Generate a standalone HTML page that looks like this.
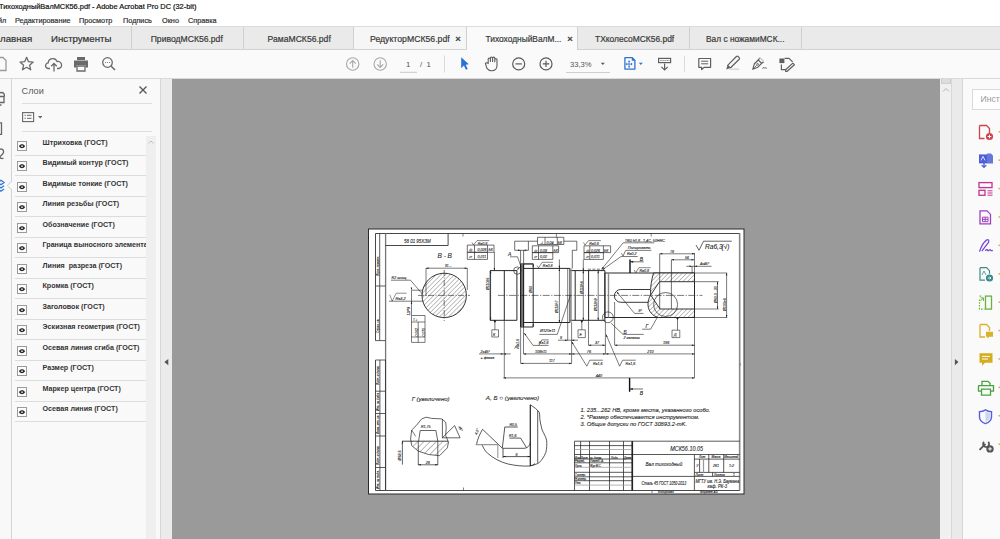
<!DOCTYPE html>
<html><head><meta charset="utf-8">
<style>
*{margin:0;padding:0;box-sizing:border-box}
html,body{width:1000px;height:539px;overflow:hidden;background:#fff;font-family:"Liberation Sans",sans-serif}
.a{position:absolute;white-space:nowrap}
#title span,#menu span,#tabs span,.tab{-webkit-text-stroke:0.2px currentColor}
#title{left:0;top:0;width:1000px;height:14px;background:#fff}
#menu{left:0;top:14px;width:1000px;height:12px;background:#fff}
#tabs{left:0;top:26px;width:1000px;height:24px;background:#eaeaea;border-top:1px solid #dcdcdc;border-bottom:1px solid #d2d2d2}
#tb{left:0;top:50px;width:1000px;height:29px;background:#fafafa;border-bottom:1px solid #dadada}
#main{left:0;top:79px;width:1000px;height:460px;background:#9a9a9a}
.tx{font-size:8px;color:#222}
.tab{position:absolute;top:0;height:22px;border-right:1px solid #d0d0d0;font-size:8.4px;color:#3a3a3a;line-height:21px;text-align:center}
.tt{top:6.5px;color:#3a3a3a}
.row{position:absolute;left:0;width:131px;height:20.5px;border-bottom:1px solid #dcdcdc}
.row .eye{position:absolute;left:1.5px;top:5.3px;width:10px;height:10px;border:1px solid #9a9a9a;background:#fcfcfc}
.row .lt{position:absolute;left:27.5px;top:3.6px;font-size:7.15px;font-weight:bold;color:#333}
</style></head>
<body>
<div id="title" class="a"><span class="a tx" style="left:-1px;top:2px;font-size:7.4px;color:#111">ТихоходныйВалМСК56.pdf - Adobe Acrobat Pro DC (32-bit)</span></div>
<div id="menu" class="a">
<span class="a tx" style="left:-2px;top:2px;font-size:7.3px;color:#333">йл</span>
<span class="a tx" style="left:15px;top:2px;font-size:7.3px;color:#333">Редактирование</span>
<span class="a tx" style="left:79px;top:2px;font-size:7.3px;color:#333">Просмотр</span>
<span class="a tx" style="left:123px;top:2px;font-size:7.3px;color:#333">Подпись</span>
<span class="a tx" style="left:162px;top:2px;font-size:7.3px;color:#333">Окно</span>
<span class="a tx" style="left:188px;top:2px;font-size:7.3px;color:#333">Справка</span>
</div>
<div id="tabs" class="a">
<span class="a" style="left:0;top:5.5px;font-size:9.7px;color:#333">лавная</span>
<span class="a" style="left:51px;top:5.5px;font-size:9.7px;color:#333">Инструменты</span>
<div class="tab" style="left:131px;width:113px;border-left:1px solid #d0d0d0"></div>
<div class="tab" style="left:244px;width:110px"></div>
<div class="tab" style="left:354px;width:113px;background:#f6f6f6"></div>
<div class="tab" style="left:467px;width:111px;background:#fafafa;height:23px"></div>
<div class="tab" style="left:578px;width:112px"></div>
<div class="tab" style="left:690px;width:112px"></div>
<span class="a tt" style="left:150.7px;font-size:8.6px">ПриводМСК56.pdf</span>
<span class="a tt" style="left:267.6px;font-size:8.6px">РамаМСК56.pdf</span>
<span class="a tt" style="left:370px;font-size:8.7px">РедукторМСК56.pdf</span>
<span class="a tt" style="left:455.2px;top:6px;font-size:9.5px;color:#4a4a4a;-webkit-text-stroke:0.5px #4a4a4a">×</span>
<span class="a tt" style="left:485.5px;font-size:8.4px">ТихоходныйВалМ...</span>
<span class="a tt" style="left:567.2px;top:6px;font-size:9.5px;color:#4a4a4a;-webkit-text-stroke:0.5px #4a4a4a">×</span>
<span class="a tt" style="left:595px;font-size:8.45px">ТХколесоМСК56.pdf</span>
<span class="a tt" style="left:706px;font-size:8.35px">Вал с ножамиМСК...</span>
</div>
<div id="tb" class="a">
<svg class="a" style="left:0;top:0" width="1000" height="29" viewBox="0 50 1000 29">
 <g fill="none" stroke="#6a6a6a" stroke-width="1.3">
  <!-- save (cut) -->
  <path d="M-3 57.5h6l3 3v10h-9z" stroke="#9a9a9a"/>
  <!-- star -->
  <path d="M26.6 57.3l1.9 4.4 4.7.4-3.6 3.1 1.1 4.6-4.1-2.5-4.1 2.5 1.1-4.6-3.6-3.1 4.7-.4z" stroke-linejoin="round"/>
  <!-- cloud upload -->
  <path d="M50 68.5h-1.5a2.8 2.8 0 0 1 -.3-5.6a4.6 4.6 0 0 1 8.9-1.3a3.3 3.3 0 0 1 1.8 6.9h-1.9" stroke-linejoin="round"/>
  <path d="M54 71.5v-8m-2.8 2.8l2.8-2.8 2.8 2.8"/>
  <!-- zoom search -->
  <circle cx="107.5" cy="62.5" r="4.8"/>
  <path d="M111 66l4 4" stroke-width="1.6"/>
 </g>
 <!-- printer -->
 <g fill="#6a6a6a">
  <path d="M77 57h8v3h-8z"/>
  <path d="M74 60.5h14v7h-2.5v-2.5h-9v2.5h-2.5z"/>
  <path d="M77 66h8v5h-8z" fill="none" stroke="#6a6a6a" stroke-width="1.3"/>
 </g>
 <g fill="#777"><circle cx="105.5" cy="62.5" r=".6"/><circle cx="107.5" cy="62.5" r=".6"/><circle cx="109.5" cy="62.5" r=".6"/></g>
 <!-- up/down circles -->
 <g fill="none" stroke="#a8a8a8" stroke-width="1.1">
  <circle cx="352.7" cy="64" r="6.2"/>
  <path d="M352.7 67.8v-7.2m-3 3l3-3 3 3"/>
  <circle cx="380.2" cy="64" r="6.2"/>
  <path d="M380.2 60.2v7.2m-3-3l3 3 3-3"/>
 </g>
 <path d="M400 72.3h17" stroke="#c8c8c8" stroke-width="1"/>
 <path d="M444.5 55.5v17" stroke="#dadada" stroke-width="1"/>
 <!-- blue select arrow -->
 <path d="M461.2 57.2L468.8 64.3L465.7 64.8L467.7 69L465.9 69.8L463.9 65.6L461.2 68.2z" fill="#2a72d4"/>
 <!-- hand -->
 <path d="M485.4 63.3c.7-.9 2-.7 2.8.3V58.9c0-1.3 2.2-1.3 2.2 0V61.5V58c0-1.3 2.2-1.3 2.2 0V61.5V58.1c0-1.3 2.2-1.3 2.2 0V61.8V59.6c0-1.2 2.2-1.2 2.2 0V65.6c0 3-2.2 5.1-5 5.1h-1c-2 0-3.2-1.2-4.2-2.5z" fill="none" stroke="#5a5a5a" stroke-width="1.1" stroke-linejoin="round"/>
 <g fill="none" stroke="#5a5a5a" stroke-width="1.2">
  <circle cx="518.7" cy="63.9" r="6"/><path d="M515.5 63.9h6.4"/>
  <circle cx="546" cy="63.9" r="6"/><path d="M542.8 63.9h6.4M546 60.7v6.4"/>
 </g>
 <path d="M566 72.5h44" stroke="#cfcfcf" stroke-width="1"/>
 <path d="M600.8 62.8h4l-2 2.2z" fill="#555"/>
 <!-- blue fit page icon -->
 <g fill="none" stroke="#2e72d2" stroke-width="1.3" stroke-linejoin="round">
  <path d="M624.9 57.7h7.3l2.7 2.7v8.7h-10z"/>
 </g>
 <path d="M631.8 57.7h.9l2.2 2.2v.9h-3.1z" fill="#2e72d2"/>
 <g fill="none" stroke="#2e72d2" stroke-width="0.8">
  <path d="M629.1 61v6.3M626.4 64.1h5.4"/>
 </g>
 <path d="M629.1 60.2l-1.3 1.6h2.6zM629.1 68.1l-1.3-1.6h2.6zM625.6 64.1l1.6-1.3v2.6zM632.6 64.1l-1.6-1.3v2.6z" fill="#2e72d2"/>
 <path d="M638.8 62.8h4l-2 2.2z" fill="#2e72d2"/>
 <!-- keyboard scroll -->
 <rect x="658.6" y="58.4" width="12" height="4.2" fill="none" stroke="#5f5f5f" stroke-width="1.2"/>
 <g fill="#6f6f6f"><rect x="660.4" y="60" width="1.1" height="1"/><rect x="662.5" y="60" width="1.1" height="1"/><rect x="664.6" y="60" width="1.1" height="1"/><rect x="666.7" y="60" width="1.1" height="1"/><rect x="668.5" y="60" width=".8" height="1"/></g>
 <path d="M664.6 63.6v6.4m-3.2-3.2l3.2 3.2 3.2-3.2" fill="none" stroke="#5f5f5f" stroke-width="1.2"/>
 <path d="M684.5 55.7v16" stroke="#dadada" stroke-width="1"/>
 <!-- comment -->
 <g fill="none" stroke="#5f5f5f" stroke-width="1.2" stroke-linejoin="round">
  <path d="M698.8 58.5h11.8v8.8h-6.5l-2.4 2.4v-2.4h-2.9z"/>
  <path d="M701.2 61.2h7m-7 2.6h7" stroke-width="1"/>
 </g>
 <!-- highlighter -->
 <path d="M727.6 65.3L736.4 56.5Q737.3 55.8 738.1 56.5L739.2 57.6Q739.8 58.4 739.2 59.2L730.3 68z" fill="none" stroke="#5f5f5f" stroke-width="1.2" stroke-linejoin="round"/>
 <path d="M727.6 65.3L730.3 68L726.2 69.6z" fill="#5f5f5f"/>
 <rect x="729.5" y="68.3" width="9.8" height="1.8" fill="#dcdcdc"/>
 <!-- pen sign -->
 <g fill="none" stroke="#5f5f5f" stroke-width="1.2" stroke-linejoin="round">
  <path d="M752.8 69.3l1.6-5.6 3.9-3.7 3.3 3.3-3.7 3.9z"/>
  <path d="M758.3 60l1.5-2.2M761.6 63.3l2.2-1.5" />
  <circle cx="757.6" cy="64.3" r=".9" stroke-width=".9"/>
  <path d="M753.2 68.9l3.6-3.7" stroke-width=".8"/>
 </g>
 <path d="M759.8 57.6l3.9 3.9" stroke="#cfcfcf" stroke-width="1.6"/>
 <path d="M762.5 68.8l1-1.6.8 1.2.9-1.1.6.9h1.2" fill="none" stroke="#5f5f5f" stroke-width=".8"/>
 <!-- fill & sign -->
 <g fill="none" stroke="#5f5f5f" stroke-width="1.2" stroke-linejoin="round">
  <path d="M784.6 58.3h4.4l3.6 3.6"/>
  <path d="M781.4 64.5v5.2h4.2"/>
  <path d="M785.6 69.7l7.2-6.6 1.6 1.6-7.2 6.6h-1.6z"/>
 </g>
 <rect x="779.4" y="58.5" width="5" height="4.6" fill="#5f5f5f"/>
</svg>
<span class="a" style="left:406px;top:10px;font-size:7.8px;color:#555">1</span>
<span class="a" style="left:420px;top:10px;font-size:7.8px;color:#555">/&nbsp;&nbsp;1</span>
<span class="a" style="left:570px;top:10px;font-size:7.6px;color:#555">33,3%</span>
</div>

<div id="main" class="a">
  
  <!-- left icon strip -->
  <div class="a" style="left:0;top:0;width:12px;height:460px;background:#f8f8f8;border-right:1px solid #d4d4d4"></div>
  <svg class="a" style="left:0;top:0" width="14" height="120" viewBox="0 79 14 120">
   <g fill="none" stroke="#666" stroke-width="1.3">
    <path d="M-2 96.5c0-2.5 1.5-4 3.5-4s3 1.5 3 4"/>
    <path d="M-3 96.5h7v6h-7zM-1 102.5v2.5h2.5"/>
    <path d="M-2 122.8h3.5v11.5h-3.5"/>
    <path d="M-1 149.5c2.5-1.2 5 0 4.5 2.8-.4 2.2-3 2.8-3.6 4.8.5 1.5 2.5 1.8 3.5 1"/>
   </g>
   <g fill="none" stroke="#2f74d6" stroke-width="1.3">
    <path d="M-2 182.5l3-2.2 3 2.2-3 2.2z"/>
    <path d="M-2 185.8l3 2.2 3-2.2M-2 189l3 2.2 3-2.2"/>
   </g>
   <path d="M12.6 180.5l-5.4 5 5.4 5" fill="#f9f9f9" stroke="#d0d0d0" stroke-width="1"/>
  </svg>
  <!-- layers panel -->
  <div class="a" style="left:12px;top:0;width:149px;height:460px;background:#f9f9f9;border-right:1px solid #d6d6d6;overflow:hidden">
    <span class="a" style="left:9.5px;top:6.5px;font-size:9.2px;color:#5c5c5c">Слои</span>
    <svg class="a" style="left:126px;top:6px" width="10" height="10" viewBox="0 0 10 10"><path d="M1.5 1.5l7 7m0-7l-7 7" stroke="#555" stroke-width="1.3"/></svg>
    <div class="a" style="left:10px;top:24px;width:130px;height:1px;background:#dedede"></div>
    <svg class="a" style="left:10px;top:33px" width="20" height="11" viewBox="0 0 20 11"><rect x="0.6" y="0.6" width="11" height="9" fill="none" stroke="#666" stroke-width="1.1"/><path d="M2.5 3.3h1.3m1.2 0h4.5M2.5 6.3h1.3m1.2 0h4.5" stroke="#666" stroke-width="1"/><path d="M16 4h4.4l-2.2 2.4z" fill="#666"/></svg>
    <div class="a" style="left:10px;top:52px;width:130px;height:1px;background:#dedede"></div>
    <div class="a" style="left:134px;top:57px;width:10px;height:403px;background:#efefef"></div>
    <svg class="a" style="left:135px;top:60px" width="8" height="6" viewBox="0 0 8 6"><path d="M1.5 4.5l2.5-2.5 2.5 2.5" fill="none" stroke="#bdbdbd" stroke-width="1"/></svg>
    <div class="a" style="left:3px;top:0;width:131px;height:460px;overflow:hidden">
    <div class="row" style="top:56.3px"><div class="eye"><svg width="8" height="8" viewBox="0 0 8 8" style="position:absolute;left:0;top:0"><path d="M0.9 4.3c.9-1.4 1.9-2 3.1-2s2.2.6 3.1 2c-.9 1.3-1.9 1.9-3.1 1.9s-2.2-.6-3.1-1.9z" fill="#2a2a2a"/><circle cx="4" cy="4.2" r=".9" fill="#ddd"/></svg></div><span class="lt">Штриховка (ГОСТ)</span></div><div class="row" style="top:76.8px"><div class="eye"><svg width="8" height="8" viewBox="0 0 8 8" style="position:absolute;left:0;top:0"><path d="M0.9 4.3c.9-1.4 1.9-2 3.1-2s2.2.6 3.1 2c-.9 1.3-1.9 1.9-3.1 1.9s-2.2-.6-3.1-1.9z" fill="#2a2a2a"/><circle cx="4" cy="4.2" r=".9" fill="#ddd"/></svg></div><span class="lt">Видимый контур (ГОСТ)</span></div><div class="row" style="top:97.3px"><div class="eye"><svg width="8" height="8" viewBox="0 0 8 8" style="position:absolute;left:0;top:0"><path d="M0.9 4.3c.9-1.4 1.9-2 3.1-2s2.2.6 3.1 2c-.9 1.3-1.9 1.9-3.1 1.9s-2.2-.6-3.1-1.9z" fill="#2a2a2a"/><circle cx="4" cy="4.2" r=".9" fill="#ddd"/></svg></div><span class="lt">Видимые тонкие (ГОСТ)</span></div><div class="row" style="top:117.8px"><div class="eye"><svg width="8" height="8" viewBox="0 0 8 8" style="position:absolute;left:0;top:0"><path d="M0.9 4.3c.9-1.4 1.9-2 3.1-2s2.2.6 3.1 2c-.9 1.3-1.9 1.9-3.1 1.9s-2.2-.6-3.1-1.9z" fill="#2a2a2a"/><circle cx="4" cy="4.2" r=".9" fill="#ddd"/></svg></div><span class="lt">Линия резьбы (ГОСТ)</span></div><div class="row" style="top:138.3px"><div class="eye"><svg width="8" height="8" viewBox="0 0 8 8" style="position:absolute;left:0;top:0"><path d="M0.9 4.3c.9-1.4 1.9-2 3.1-2s2.2.6 3.1 2c-.9 1.3-1.9 1.9-3.1 1.9s-2.2-.6-3.1-1.9z" fill="#2a2a2a"/><circle cx="4" cy="4.2" r=".9" fill="#ddd"/></svg></div><span class="lt">Обозначение (ГОСТ)</span></div><div class="row" style="top:158.8px"><div class="eye"><svg width="8" height="8" viewBox="0 0 8 8" style="position:absolute;left:0;top:0"><path d="M0.9 4.3c.9-1.4 1.9-2 3.1-2s2.2.6 3.1 2c-.9 1.3-1.9 1.9-3.1 1.9s-2.2-.6-3.1-1.9z" fill="#2a2a2a"/><circle cx="4" cy="4.2" r=".9" fill="#ddd"/></svg></div><span class="lt">Граница выносного элемента (ГОСТ)</span></div><div class="row" style="top:179.3px"><div class="eye"><svg width="8" height="8" viewBox="0 0 8 8" style="position:absolute;left:0;top:0"><path d="M0.9 4.3c.9-1.4 1.9-2 3.1-2s2.2.6 3.1 2c-.9 1.3-1.9 1.9-3.1 1.9s-2.2-.6-3.1-1.9z" fill="#2a2a2a"/><circle cx="4" cy="4.2" r=".9" fill="#ddd"/></svg></div><span class="lt">Линия&nbsp; разреза (ГОСТ)</span></div><div class="row" style="top:199.8px"><div class="eye"><svg width="8" height="8" viewBox="0 0 8 8" style="position:absolute;left:0;top:0"><path d="M0.9 4.3c.9-1.4 1.9-2 3.1-2s2.2.6 3.1 2c-.9 1.3-1.9 1.9-3.1 1.9s-2.2-.6-3.1-1.9z" fill="#2a2a2a"/><circle cx="4" cy="4.2" r=".9" fill="#ddd"/></svg></div><span class="lt">Кромка (ГОСТ)</span></div><div class="row" style="top:220.3px"><div class="eye"><svg width="8" height="8" viewBox="0 0 8 8" style="position:absolute;left:0;top:0"><path d="M0.9 4.3c.9-1.4 1.9-2 3.1-2s2.2.6 3.1 2c-.9 1.3-1.9 1.9-3.1 1.9s-2.2-.6-3.1-1.9z" fill="#2a2a2a"/><circle cx="4" cy="4.2" r=".9" fill="#ddd"/></svg></div><span class="lt">Заголовок (ГОСТ)</span></div><div class="row" style="top:240.8px"><div class="eye"><svg width="8" height="8" viewBox="0 0 8 8" style="position:absolute;left:0;top:0"><path d="M0.9 4.3c.9-1.4 1.9-2 3.1-2s2.2.6 3.1 2c-.9 1.3-1.9 1.9-3.1 1.9s-2.2-.6-3.1-1.9z" fill="#2a2a2a"/><circle cx="4" cy="4.2" r=".9" fill="#ddd"/></svg></div><span class="lt">Эскизная геометрия (ГОСТ)</span></div><div class="row" style="top:261.3px"><div class="eye"><svg width="8" height="8" viewBox="0 0 8 8" style="position:absolute;left:0;top:0"><path d="M0.9 4.3c.9-1.4 1.9-2 3.1-2s2.2.6 3.1 2c-.9 1.3-1.9 1.9-3.1 1.9s-2.2-.6-3.1-1.9z" fill="#2a2a2a"/><circle cx="4" cy="4.2" r=".9" fill="#ddd"/></svg></div><span class="lt">Осевая линия сгиба (ГОСТ)</span></div><div class="row" style="top:281.8px"><div class="eye"><svg width="8" height="8" viewBox="0 0 8 8" style="position:absolute;left:0;top:0"><path d="M0.9 4.3c.9-1.4 1.9-2 3.1-2s2.2.6 3.1 2c-.9 1.3-1.9 1.9-3.1 1.9s-2.2-.6-3.1-1.9z" fill="#2a2a2a"/><circle cx="4" cy="4.2" r=".9" fill="#ddd"/></svg></div><span class="lt">Размер (ГОСТ)</span></div><div class="row" style="top:302.3px"><div class="eye"><svg width="8" height="8" viewBox="0 0 8 8" style="position:absolute;left:0;top:0"><path d="M0.9 4.3c.9-1.4 1.9-2 3.1-2s2.2.6 3.1 2c-.9 1.3-1.9 1.9-3.1 1.9s-2.2-.6-3.1-1.9z" fill="#2a2a2a"/><circle cx="4" cy="4.2" r=".9" fill="#ddd"/></svg></div><span class="lt">Маркер центра (ГОСТ)</span></div><div class="row" style="top:322.8px"><div class="eye"><svg width="8" height="8" viewBox="0 0 8 8" style="position:absolute;left:0;top:0"><path d="M0.9 4.3c.9-1.4 1.9-2 3.1-2s2.2.6 3.1 2c-.9 1.3-1.9 1.9-3.1 1.9s-2.2-.6-3.1-1.9z" fill="#2a2a2a"/><circle cx="4" cy="4.2" r=".9" fill="#ddd"/></svg></div><span class="lt">Осевая линия (ГОСТ)</span></div>
    </div>
  </div>
  <div class="a" style="left:161px;top:0;width:11px;height:460px;background:#ebebeb"></div>
  <svg class="a" style="left:161px;top:279px" width="11" height="12" viewBox="0 0 11 12"><path d="M7.3 1v6.2l-4-3.1z" fill="#555"/></svg>

  <!-- right scroll -->
  <div class="a" style="left:940px;top:0;width:12px;height:460px;background:#f0f0f0;border-right:1px solid #d8d8d8"></div>
  <div class="a" style="left:941px;top:0;width:10px;height:5px;background:#dcdcdc;border:1px solid #cfcfcf;border-top:0"></div>
  <svg class="a" style="left:941px;top:7px" width="10" height="8" viewBox="0 0 10 8"><path d="M2 5.5l3-3 3 3" fill="none" stroke="#b0b0b0" stroke-width="1"/></svg>
  <div class="a" style="left:952px;top:0;width:11px;height:460px;background:#eaeaea;border-right:1px solid #d6d6d6"></div>
  <svg class="a" style="left:952px;top:279px" width="11" height="12" viewBox="0 0 11 12"><path d="M2.9 1v6.2l3.6-3.1z" fill="#555"/></svg>
  <div class="a" style="left:963px;top:0;width:37px;height:460px;background:#fafafa"></div>
  <div class="a" style="left:972px;top:9.5px;width:40px;height:21px;background:#fff;border:1px solid #dadada"></div>
  <span class="a" style="left:980.5px;top:15px;font-size:8.6px;color:#9a9a9a">Инструм</span>
  <svg class="a" style="left:0;top:0" width="1000" height="460" viewBox="0 79 1000 460"><path d="M979.5 125.5h7l3 3v6" fill="none" stroke="#d0424e" stroke-width="1.3"/><path d="M979.5 125.5v13h5" fill="none" stroke="#d0424e" stroke-width="1.3"/><circle cx="989.5" cy="136.5" r="3.6" fill="#d0424e"/><path d="M987.7 136.5h3.6M989.5 134.7v3.6" stroke="#fff" stroke-width="1"/><rect x="979" y="154.4" width="8" height="9" fill="#4b5fd6"/><path d="M987 153.4h4l2 2v8h-6z" fill="#4b5fd6" opacity=".85"/><path d="M984 161.4v6m-2.3-2.3l2.3 2.3 2.3-2.3" stroke="#4b5fd6" stroke-width="1.3" fill="none"/><path d="M981 160.4l2-4 2 4" stroke="#fff" stroke-width=".8" fill="none"/><rect x="979" y="182.60000000000002" width="13" height="5" fill="none" stroke="#c2338f" stroke-width="1.3"/><rect x="979" y="190.3" width="6" height="5" fill="none" stroke="#c2338f" stroke-width="1.3"/><path d="M987.5 190.8h5m-5 2.2h5m-5 2.2h5" stroke="#c2338f" stroke-width="1"/><path d="M980 210.89999999999998h7l3.5 3.5v9.5h-10.5z" fill="none" stroke="#a13fc2" stroke-width="1.3"/><path d="M982.5 217.2h5.5v4.5h-5.5zM985.2 217.2v4.5M982.5 219.39999999999998h5.5" fill="none" stroke="#a13fc2" stroke-width="1"/><path d="M979.5 251.6c1-3 3.5-9 7-11.5 2-1.2 3 .8 1.8 2.6l-6.5 8.5M985 250.6c1.5-1 2-1.5 2.5-.5s.5 1 1.5.2 1.2-.8 1.8 0 1 .3 2 0" fill="none" stroke="#7a48d0" stroke-width="1.3" stroke-linejoin="round"/><path d="M980 267.7h6.5l3 3v3M980 267.7v12.5h5" fill="none" stroke="#3a8b8b" stroke-width="1.2"/><circle cx="989.5" cy="278.0" r="3.6" fill="#3a8b8b"/><path d="M987.8 278.0h3.2m-1.3-1.3l1.3 1.3-1.3 1.3" stroke="#fff" stroke-width=".9" fill="none"/><path d="M982 275.0l2-4 2 4" stroke="#3a8b8b" stroke-width=".8" fill="none"/><rect x="985.5" y="296.09999999999997" width="6" height="13" fill="none" stroke="#6bb33a" stroke-width="1.3"/><path d="M979.5 299.4v9.7h5M979.5 296.09999999999997h3" fill="none" stroke="#6bb33a" stroke-width="1.2" stroke-dasharray="1.6 1.2"/><path d="M980.5 300.9l3-3m-3 0h3v3" fill="none" stroke="#6bb33a" stroke-width="1"/><path d="M980 324.49999999999994h6.5l3 3v3.5M980 324.49999999999994v12.5h5" fill="none" stroke="#d9b22a" stroke-width="1.3"/><path d="M986 331.79999999999995h7v5h-3.5l-2 2v-2h-1.5z" fill="#d9b22a"/><path d="M979.5 353.2h13v9.5h-7.5l-3 3v-3h-2.5z" fill="#d4ae1f"/><path d="M982 356.4h8m-8 2.6h6" stroke="#fff" stroke-width="1"/><path d="M982 385.6v-4.3h6l2 2v2.3M978.5 385.6h15v5.5h-3M981.5 391.1h-3v-5.5M981.5 389.1h9v6h-9z" fill="none" stroke="#4aa13f" stroke-width="1.3"/><path d="M985.5 409.8c2 1.3 4 1.8 6 1.8v5.5c0 3.2-2.7 5.5-6 6.6-3.3-1.1-6-3.4-6-6.6v-5.5c2 0 4-.5 6-1.8z" fill="none" stroke="#5560d8" stroke-width="1.4"/><path d="M985.5 411.5c1.5.9 3 1.3 4.5 1.3v4.3c0 2.3-2 4.1-4.5 5z" fill="#5560d8" opacity=".25"/><path d="M979.5 449.9l6-6M984 441.9a3 3 0 1 0 4.2 0" fill="none" stroke="#555555" stroke-width="1.8"/><circle cx="990" cy="448.9" r="3.7" fill="#555555"/><path d="M988.2 448.9h3.6M990 447.09999999999997v3.6" stroke="#fff" stroke-width="1"/><rect x="998.5" y="131.0" width="1.5" height="1.5" fill="#e8a64a"/><rect x="998.5" y="159.4" width="1.5" height="1.5" fill="#e8a64a"/><rect x="998.5" y="187.8" width="1.5" height="1.5" fill="#e8a64a"/><rect x="998.5" y="216.2" width="1.5" height="1.5" fill="#e8a64a"/><rect x="998.5" y="244.6" width="1.5" height="1.5" fill="#e8a64a"/><rect x="998.5" y="273.0" width="1.5" height="1.5" fill="#e8a64a"/><rect x="998.5" y="301.4" width="1.5" height="1.5" fill="#e8a64a"/><rect x="998.5" y="329.79999999999995" width="1.5" height="1.5" fill="#e8a64a"/><rect x="998.5" y="358.2" width="1.5" height="1.5" fill="#e8a64a"/><rect x="998.5" y="386.6" width="1.5" height="1.5" fill="#e8a64a"/><rect x="998.5" y="415.0" width="1.5" height="1.5" fill="#e8a64a"/><rect x="998.5" y="443.4" width="1.5" height="1.5" fill="#e8a64a"/></svg>
</div>
<!-- DRAWING --><svg class="a" style="left:0;top:0" width="1000" height="539" viewBox="0 0 1000 539">
<defs>
 <pattern id="h" patternUnits="userSpaceOnUse" width="3.2" height="3.2" patternTransform="rotate(45)">
  <rect width="3.2" height="3.2" fill="#fff"/><line x1="0" y1="0" x2="0" y2="3.2" stroke="#333" stroke-width="0.6"/>
 </pattern>
 <pattern id="h2" patternUnits="userSpaceOnUse" width="4.4" height="4.4" patternTransform="rotate(45)">
  <rect width="4.4" height="4.4" fill="#fff"/><line x1="0" y1="0" x2="0" y2="4.4" stroke="#333" stroke-width="0.65"/>
 </pattern>
</defs>
<!-- paper -->
<rect x="368.5" y="229" width="375.5" height="265" fill="#fff" stroke="#2a2a2a" stroke-width="1"/>
<!-- frame -->
<g fill="none" stroke="#333">
 <path d="M375.5 340.6V233.5h364.3v257h-364.3V360" stroke-width="0.9"/>
 <path d="M385.6 233.5v257" stroke="#777" stroke-width="1.3"/>
 <path d="M379.7 233.5v107M375.5 286h10M375.5 340.6h10" stroke-width="0.8"/>
 <path d="M375.5 360h10v130.5M379.9 360v130.5M375.5 391.2h10M375.5 413.5h10M375.5 436h10M375.5 467.5h10" stroke-width="0.8"/>
 <path d="M385.6 245.5h62.5v-12" stroke-width="0.9"/>
 <path d="M463 233.5v3M556.4 233.5v4M651.2 233.5v3M740 363v3M463.5 490.5v-3" stroke-width="0.6"/>
</g>
<!-- frame right double -->
<path d="M739.4 233.5v257" stroke="#888" stroke-width="1.1"/>

<!-- ===== section B-B ===== -->
<circle cx="444.2" cy="295.4" r="22.2" fill="url(#h)" stroke="#222" stroke-width="0.9"/>
<g stroke="#222" stroke-width="0.6" fill="none">
 <path d="M444.2 270v51M418 295.4h52" stroke-dasharray="6 1.5 1 1.5"/>
 <path d="M426 268.2h41.3M426 268v28M467.3 268v22"/>
 <path d="M391 280.2h19.5l12 14"/>
 <path d="M389 301.2h33.8M411.5 290.2v25M411.5 290.2h11"/>
 <path d="M389.7 294.7l2.5 6.5 4-8h10.5" stroke-width="0.5"/>
 <path d="M411.5 315.5h13.5v26.9h-13.5zM411.5 322h13.5M411.5 337h13.5M418.2 322v20.4"/>
</g>
<!-- ===== shaft main view ===== -->
<g stroke="#1e1e1e" stroke-width="0.95" fill="none">
 <!-- left journal -->
 <path d="M490.2 270.6h26.7v49.7h-26.7z"/>
 <path d="M504.3 270.6v49.7"/>
 <!-- collar -->
 <path d="M520.6 263.9h12.6v63.1h-12.6z"/>
 <path d="M522.1 263.9v63.1" stroke="#777" stroke-width="3.6"/>
 <path d="M523.6 263.9v63.1" stroke-width="1.1"/>
 <path d="M520.6 263.9v63.1" stroke-width="1.1"/>
 <!-- main body -->
 <path d="M523.6 268.4h46.3v54.1h-46.3"/>
 <!-- step section -->
 <path d="M569.9 270.6h35v49.7h-35"/>
 <path d="M575.2 270.6v49.7M588.6 270.6v49.7"/>
 <!-- right part -->
 <path d="M604.9 273h89.6v44.5h-89.6z"/>
</g>
<g stroke="#8a8a8a" stroke-width="1.4" fill="none">
 <path d="M571 268.4v54M608.5 273v44.5"/>
</g>
<!-- slot (keyway) -->
<path d="M650 289.5h-29.2a6.4 6.4 0 0 0 0 12.8h29" fill="none" stroke="#222" stroke-width="0.9"/>
<!-- hatched end (bore wall) -->
<path d="M653.5 273h41v8.7h-35l-8.8 13.3c-.8-7 1-15.5 2.8-22z" fill="url(#h)" stroke="#222" stroke-width="0.9"/>
<path d="M650.7 295l9.3 14h34.5v8.5h-36c-6-1.5-10-6-10.5-12.5-.2-3.5.8-7 2.7-10z" fill="url(#h)" stroke="#222" stroke-width="0.9"/>
<g stroke="#222" stroke-width="0.65" fill="none">
 <path d="M659.7 253.8v55.2M671.4 259.8v49.2"/>
 <circle cx="665.6" cy="304.5" r="12"/>
 <circle cx="517.3" cy="270.6" r="3.7"/>
 <circle cx="607.9" cy="317.3" r="5.4"/>
</g>
<!-- centerline -->
<path d="M497.9 295.4h204.6" stroke="#222" stroke-width="0.6" stroke-dasharray="7 1.5 1.2 1.5"/>

<!-- dimension lines -->
<g stroke="#222" stroke-width="0.6" fill="none">
 <path d="M504.3 320.3v57.6M503.4 377.9h191.2M694.5 317.5v60.4"/>
 <path d="M520.6 327v36.4M520.6 363.4h51.1M571.6 322.5v41"/>
 <path d="M523.5 327v27M523.5 353.9h171M605.4 320.3v33.6"/>
 <path d="M479 353.9h31.7"/>
 <path d="M588.5 320.3v25M588.5 345.2h16.9"/>
 <path d="M614.6 302v43M614.6 345.2h80"/>
 <path d="M567.7 268.4v71.9M558 340.2h20"/>
 <path d="M559.4 259.4v63"/>
 <path d="M490.6 270.6v49.7"/>
 <path d="M583.3 259.4v60.9M598.2 270.6v49.7"/>
 <path d="M494.4 252v18.6M494.9 320.3v9.5M581.8 320.3v9.5M677.5 317.5v12.7"/>
 <path d="M491.8 329.8h6.7v7.2h-6.7zM578 329.8h7.3v7.8h-7.3zM672 330.2h7.8v7.4h-7.8z"/>
 <path d="M493.3 320.3h3.2l-1.6 2.6zM580.2 320.3h3.2l-1.6 2.6zM675.9 317.5h3.2l-1.6 2.6z" fill="#222" stroke="none"/>
 <path d="M570.3 295.4l-13 39h-17.9M524.2 333l8.8 12.4h15.5M571.7 341.7l15.1 24.5M606 334.4l13.6 31.8"/>
 <path d="M586.8 366.2l3-6h13.1M619.6 366.2l3-6h13.2M538.8 345.4l3-5.5h7"/>
 <path d="M611.2 323.3l11.8 11.1h20.7"/>
 <path d="M616.7 291.7l17.8 21.7h9"/>
 <path d="M657 318l-6.4 11.2h-8.5"/>
 <path d="M514.6 348.6l2-3.5" />
 <path d="M659.7 253.8h35M671.4 259.8h22.7M694.5 253v20M686.3 266.3h25.3M692.1 266.3v7"/>
 <path d="M694.5 273h32.7M694.5 317.5h32.7M726.6 273v44.5M694.5 281.7h24.3M694.5 309h24.3M717.5 281.7v27.3"/>
 <path d="M510 256.8h7.5l3.5 10"/>
 <path d="M654.4 242.8h-31.2l-21.5 26.4"/>
 <path d="M625.8 250.4h25.6M637.7 256.5h-16.7l-18.6 13.4M621.4 253.2l1.7 2.8 2.5-5.6"/>
 <path d="M587.9 269.2h14" stroke-dasharray="3 1.5"/>
</g>
<!-- tolerance frames -->
<g stroke="#222" stroke-width="0.65" fill="none">
 <path d="M467.3 245.1h26.7v7.2h-26.7zM467.3 252.3h20.2v7.1h-20.2zM474.5 245.1v14.3M487.5 245.1v7.2"/>
 <path d="M472 242.5l1.5 2.5 3.5-4.4h12.4" stroke-width="0.55"/>
 <path d="M532.3 245.8h26.3v6.8h-26.3zM532.3 252.6h20.5v6.8h-20.5zM538.5 245.8v13.6M552.8 245.8v6.8"/>
 <path d="M537.5 237.3h26.3v7.2h-26.3zM545 237.3v7.2M557.3 237.3v7.2"/>
 <path d="M537.5 241.2h-22.8v9.1h13.7v-9.1M563.8 241.2h13v9.1h-4.5v18.2"/>
 <path d="M520.6 250.3v13.6M523.6 250.3v13.6"/>
 <path d="M584 245.8h26.6v6.8h-26.6zM584 252.6h19.4v6.8h-19.4zM589.8 245.8v13.6M603.4 245.8v6.8"/>
 <path d="M583.5 242.5l1.5 2.5 3.5-4.4h12.4" stroke-width="0.55"/>
 <path d="M537 265.5l1.5 2.3 3.7-5.5h10.8" stroke-width="0.55"/>
 <path d="M523.6 264h10"/>
</g>
<!-- section mark B top & bottom -->
<g stroke="#111" fill="none">
 <path d="M630 259.4v13.6M629.6 377.9v13.9" stroke-width="1.4"/>
 <path d="M630 261.8h13.7M629.6 389h13.4" stroke-width="0.6"/>
</g>
<path d="M634.3 269.9l1.5 3 3-5.2h11.9" fill="none" stroke="#222" stroke-width="0.55"/>
<!-- Ra6,3 -->
<path d="M696 245l3 5.3 4.5-9.1h28.3" fill="none" stroke="#222" stroke-width="0.7"/>
<!-- detail G -->
<path d="M410.9 441.2h37.4l.2 1.1-1.2 5.6-7.8 7.8-11.1-1.2-10-3.3-6.7-5.6z" fill="url(#h2)" stroke="none"/>
<path d="M418.6 441.2h19.2l-1.9-10.7h-15.7z" fill="#fff" stroke="none"/>
<g stroke="#222" stroke-width="0.7" fill="none" stroke-linejoin="round">
 <path d="M421.7 418.9l4.5-1.7 5.5 1.2 10.1.5 3.9 3.3.5 5.6-.5 7.8 2.8 6.7-1.2 5.6-7.8 7.8-11.1-1.2-10-3.3-6.7-5.6-1.1-6.6 1.1-9 4.5-4.4z"/>
 <path d="M411.7 430l4 6.5" stroke-width="0.6"/>
 <path d="M418.6 441.2l1.6-10.7h15.7l1.9 10.7"/>
 <path d="M402 441.2h46.3" stroke-width="0.85"/>
 <path d="M442.4 419v18.8M442.3 437.8l12.3-12.2 5.5 12.2h-17.8"/>
 <path d="M402.4 441.2v23.4M418.3 441.2v24M437.8 441.2v24M418.3 464.8h19.5"/>
</g>
<!-- detail A,B -->
<g stroke="#222" stroke-width="0.75" fill="none">
 <path d="M530.3 404.8v61.2" stroke-width="1.2"/>
 <path d="M537.7 410.8v52"/>
 <path d="M530.3 404.8c3.5 2.3 7 4.5 8.9 7.5.8 2.5.4 5 .7 7.4.4 3.5 1.4 7 2.3 10.4 1.5 3.4 3.7 6.6 4.4 10.3.4 4 .2 8-.7 11.9-1.5 4-4 7.6-6.7 10.4-2.8 1.6-5.7 2.6-8.9 3"/>
 <path d="M535 463.6c-1.5 1.2-3 2-4.7 2.4-7.5.4-15-.4-22.3-2-7.5-2-14.5-5.5-20.5-10.8-2.5-2.4-4.3-5.5-5.5-8.7"/>
 <path d="M482.5 429.3l19.5 18.5"/>
 <path d="M482.5 429.3c-2.5 4.5-5 9.5-6 15.3"/>
 <path d="M475.6 444.6h22.2M497.8 444.6v13.4" stroke="#999" stroke-width="1.1"/>
 <path d="M502.5 448.3h21.5c3.3 0 5.8-2.5 6.3-6"/>
 <path d="M502.3 448.3l2.5-21.3h13M509.4 438.1h11.2l6 9.7"/>
 <path d="M503 456.6h27.3M503 448.3v9.7"/>
</g>
<!-- ARROWS --><path d="M503.40 377.90L506.00 377.15L506.00 378.65zM694.60 377.90L692.00 378.65L692.00 377.15zM520.70 363.40L523.30 362.65L523.30 364.15zM571.70 363.40L569.10 364.15L569.10 362.65zM523.50 353.90L526.10 353.15L526.10 354.65zM571.70 353.90L569.10 354.65L569.10 353.15zM571.70 353.90L574.30 353.15L574.30 354.65zM605.70 353.90L603.10 354.65L603.10 353.15zM605.70 353.90L608.30 353.15L608.30 354.65zM694.60 353.90L692.00 354.65L692.00 353.15zM503.40 353.90L500.80 354.65L500.80 353.15zM503.40 353.90L506.00 353.15L506.00 354.65zM588.50 345.20L591.10 344.45L591.10 345.95zM605.10 345.20L602.50 345.95L602.50 344.45zM614.60 345.20L617.20 344.45L617.20 345.95zM694.50 345.20L691.90 345.95L691.90 344.45zM567.70 340.20L565.10 340.95L565.10 339.45zM571.60 340.20L574.20 339.45L574.20 340.95zM490.60 270.60L491.35 273.20L489.85 273.20zM490.60 320.30L489.85 317.70L491.35 317.70zM533.20 263.90L533.95 266.50L532.45 266.50zM533.20 327.00L532.45 324.40L533.95 324.40zM559.40 268.40L560.15 271.00L558.65 271.00zM559.40 322.50L558.65 319.90L560.15 319.90zM583.30 270.60L584.05 273.20L582.55 273.20zM583.30 320.30L582.55 317.70L584.05 317.70zM598.20 270.60L598.95 273.20L597.45 273.20zM598.20 320.30L597.45 317.70L598.95 317.70zM717.50 281.70L718.25 284.30L716.75 284.30zM717.50 309.00L716.75 306.40L718.25 306.40zM726.60 273.00L727.35 275.60L725.85 275.60zM726.60 317.50L725.85 314.90L727.35 314.90zM411.50 290.20L410.75 287.60L412.25 287.60zM411.50 301.20L412.25 303.80L410.75 303.80zM659.70 253.80L662.30 253.05L662.30 254.55zM694.70 253.80L692.10 254.55L692.10 253.05zM671.40 259.80L674.00 259.05L674.00 260.55zM694.10 259.80L691.50 260.55L691.50 259.05zM426.00 268.20L428.60 267.45L428.60 268.95zM467.30 268.20L464.70 268.95L464.70 267.45zM692.10 266.30L689.50 267.05L689.50 265.55zM694.50 266.30L697.10 265.55L697.10 267.05zM402.40 441.00L403.15 443.60L401.65 443.60zM418.30 464.80L420.90 464.05L420.90 465.55zM437.80 464.80L435.20 465.55L435.20 464.05zM503.00 456.60L505.60 455.85L505.60 457.35zM530.30 456.60L527.70 457.35L527.70 455.85zM494.40 270.60L493.65 268.00L495.15 268.00zM583.30 271.00L582.55 268.40L584.05 268.40zM559.40 268.40L558.65 265.80L560.15 265.80zM520.60 250.30L518.00 251.05L518.00 249.55zM523.60 250.30L526.20 249.55L526.20 251.05zM601.70 269.20L602.74 266.70L603.91 267.64zM602.40 269.90L604.00 267.72L604.92 268.91zM630.00 261.80L633.20 260.80L633.20 262.80zM629.60 389.00L632.80 388.00L632.80 390.00zM517.30 270.60L517.79 267.94L519.13 268.61zM524.20 333.00L526.31 334.70L525.08 335.56zM571.70 341.70L573.68 343.54L572.39 344.32zM606.00 334.40L607.66 336.54L606.27 337.09zM616.70 291.70L618.91 293.26L617.74 294.20z" fill="#1a1a1a"/><!-- /ARROWS -->
<!-- title block -->
<g stroke="#222" fill="none" stroke-width="0.75">
 <path d="M574.5 441.2h165.2"/>
 <path d="M574.5 441.2v49.3M580.6 441.2v18M589.5 441.2v49.3M609.5 441.2v49.3M623.5 441.2v49.3M631.8 441.2v49.3"/>
 <path d="M574.5 445.6h58M574.5 454.5h58M574.5 459h58M574.5 462.8h58M574.5 472.3h58M574.5 476.8h58M574.5 480.7h58"/>
 <path d="M574.5 449.5h58M574.5 467.3h58M574.5 485.1h58" stroke="#999"/>
 <path d="M632.5 441.2v49.3" stroke-width="1.2"/>
 <path d="M632.5 454.5h107.2M632.5 476.4h62M694.4 454.5v36M694.4 459.1h45.3M694.4 472.4h45.3M694.4 476.4h45.3"/>
 <path d="M699.6 459.1v13.3M708.8 454.5v17.9M723.7 454.5v17.9M712.6 472.4v4"/>
 <path d="M703.5 459.1v13.3" stroke="#999" stroke-width="1.2"/>
</g>
<g font-family="Liberation Sans" font-style="italic" fill="#2a2a2a" stroke="#2a2a2a" stroke-width="0.12">
 <text x="404" y="242.5" font-size="5.6" textLength="26.6" lengthAdjust="spacingAndGlyphs">58 01 95ХЗМ</text>
 <text x="437.5" y="258.3" font-size="6.5">В - В</text>
 <text x="445" y="267.2" font-size="3.2">91…</text>
 <text x="391.6" y="278.6" font-size="3.6">R2 шлиц</text>
 <text x="395.5" y="299.6" font-size="3.8">Ra3,2</text>
 <text x="0" y="0" font-size="3.6" transform="translate(409.8 315.5) rotate(-90)">12P9</text>
 <text x="413" y="320.8" font-size="3">Т⊥</text>
 <text x="0" y="0" font-size="3.4" transform="translate(417.5 336.5) rotate(-90)">0,062</text>
 <text x="0" y="0" font-size="3.4" transform="translate(424.5 336.5) rotate(-90)">0,070</text>
 <text x="477.5" y="251" font-size="3.6">0,026</text><text x="488.5" y="251" font-size="3.4">БК</text>
 <text x="469" y="251" font-size="3.6">◎</text><text x="469" y="258.3" font-size="3.6">⌭</text>
 <text x="477.5" y="258.3" font-size="3.6">0,011</text>
 <text x="477.7" y="244.5" font-size="3.6">Ra0,8</text>
 <text x="546.5" y="243.5" font-size="3.6">0,04</text><text x="557.8" y="243.5" font-size="3.4">БК</text>
 <text x="539.5" y="243.5" font-size="4">⊥</text>
 <text x="540" y="251.5" font-size="3.6">0,08</text><text x="553.5" y="251.5" font-size="3.4">БК</text>
 <text x="533.5" y="251.5" font-size="3.6">◎</text><text x="533.5" y="258.3" font-size="3.6">⌭</text>
 <text x="540" y="258.3" font-size="3.6">0,02</text>
 <text x="542.8" y="266.7" font-size="3.6">Ra0,8</text>
 <text x="591" y="251.5" font-size="3.6">0,026</text><text x="604" y="251.5" font-size="3.4">БК</text>
 <text x="585.5" y="251.5" font-size="3.6">◎</text><text x="585.5" y="258.3" font-size="3.6">⌭</text>
 <text x="591" y="258.3" font-size="3.6">0,011</text>
 <text x="589.2" y="244.5" font-size="3.6">Ra0,8</text>
 <text x="508" y="256.3" font-size="5">A</text>
 <text x="624.7" y="242.3" font-size="3.7">ТВЧ h0,8...1,4С, 50НRC</text>
 <text x="627.7" y="248.8" font-size="3.9">Полировать</text>
 <text x="627" y="254.7" font-size="3.6">Ra0,2</text>
 <text x="639.8" y="260.7" font-size="5">В</text>
 <text x="639.8" y="394.6" font-size="5">В</text>
 <text x="639.5" y="272" font-size="3.6">Ra0,8</text>
 <text x="705" y="248.6" font-size="6.6">Ra6,3</text>
 <text x="721.5" y="248.8" font-size="6.6">(√)</text>
 <text x="670" y="253" font-size="3.6">78</text>
 <text x="685" y="259" font-size="3.6">56</text>
 <text x="700" y="265.4" font-size="3.6">4х45°</text>
 <text x="0" y="0" font-size="3.6" transform="translate(489.2 290) rotate(-90)">Ø110k6</text>
 <text x="0" y="0" font-size="3.6" transform="translate(531.6 292.8) rotate(-90)">Ø60</text>
 <text x="0" y="0" font-size="3.6" transform="translate(557.6 313) rotate(-90)">Ø118h7</text>
 <text x="0" y="0" font-size="3.6" transform="translate(582.7 293.8) rotate(-90)">Ø118h6</text>
 <text x="0" y="0" font-size="3.6" transform="translate(596.8 311) rotate(-90)">Ø118h9</text>
 <text x="0" y="0" font-size="3.6" transform="translate(716.8 303) rotate(-90)">Ø60,0...30</text>
 <text x="0" y="0" font-size="3.6" transform="translate(726 311) rotate(-90)">Ø100e6</text>
 <text x="0" y="0" font-size="3.6" transform="translate(519.3 348.6) rotate(-90)">Ra1,6</text>
 <text x="540" y="332.2" font-size="3.8">Ø120e11</text>
 <text x="538.8" y="344" font-size="3.6">Ra1,6</text>
 <text x="493" y="336" font-size="3.6">К</text>
 <text x="579.5" y="336" font-size="3.6">Е</text>
 <text x="674" y="336.3" font-size="3.6">Д</text>
 <text x="480.6" y="352.8" font-size="3.6">2х45°</text>
 <text x="480.6" y="359" font-size="3.6">+ фаска</text>
 <text x="535" y="352.8" font-size="3.6">108h11</text>
 <text x="549" y="362.3" font-size="3.6">117</text>
 <text x="560" y="339" font-size="3.6">8</text>
 <text x="595" y="344" font-size="3.8">37</text>
 <text x="586.8" y="352.8" font-size="3.8">76</text>
 <text x="647.3" y="352.8" font-size="3.8">210</text>
 <text x="663" y="344.3" font-size="3.8">196</text>
 <text x="595.7" y="376.6" font-size="3.8">440</text>
 <text x="593" y="365.2" font-size="3.6">Ra1,6</text>
 <text x="625.6" y="365.2" font-size="3.6">Ra1,6</text>
 <text x="623.6" y="333.7" font-size="5">Б</text>
 <text x="623.6" y="338.5" font-size="3.6">2 канавки</text>
 <text x="638.5" y="312.3" font-size="3.6">8°</text>
 <text x="645.4" y="327.9" font-size="5">Г</text>
 <text x="411.7" y="400.8" font-size="6" textLength="37.9" lengthAdjust="spacingAndGlyphs">Г (увеличено)</text>
 <text x="485.8" y="400.4" font-size="6" textLength="53.4" lengthAdjust="spacingAndGlyphs">А, Б ○ (увеличено)</text>
 <text x="421" y="428" font-size="3.6">R1,75</text>
 <text x="0" y="0" font-size="3.6" transform="translate(400.5 460.4) rotate(-90)">Ø58,5</text>
 <text x="425.7" y="463.6" font-size="3.8">28</text>
 <text x="0" y="0" font-size="3.6" transform="translate(458 427) rotate(60)">45°</text>
 <text x="509.5" y="425.6" font-size="3.6">R0,5</text>
 <text x="509" y="437" font-size="3.6">R1,6</text>
 <text x="515.5" y="455.5" font-size="3.6">8</text>
 <text x="0" y="0" font-size="3.6" transform="translate(477 435) rotate(-70)">4,5°</text>
 <text x="580.4" y="412" font-size="6.2" textLength="130" lengthAdjust="spacingAndGlyphs">1. 235...262 НВ, кроме места, указанного особо.</text>
 <text x="580.4" y="419.2" font-size="6.2" textLength="119" lengthAdjust="spacingAndGlyphs">2. *Размер обеспечивается инструментом.</text>
 <text x="580.4" y="426.3" font-size="6.2" textLength="106.6" lengthAdjust="spacingAndGlyphs">3. Общие допуски по ГОСТ 30893.2-mK.</text>
 <text x="670.2" y="450.6" font-size="6.3" textLength="32.8" lengthAdjust="spacingAndGlyphs">МСК56.10.05</text>
 <text x="645.5" y="466" font-size="5.9" textLength="36.8" lengthAdjust="spacingAndGlyphs">Вал тихоходный</text>
 <text x="641.5" y="485" font-size="4.6" textLength="44.8" lengthAdjust="spacingAndGlyphs">Сталь 45 ГОСТ 1050-2013</text>
 <text x="695.5" y="482.7" font-size="4.7" textLength="43.7" lengthAdjust="spacingAndGlyphs">МГТУ им. Н.Э. Баумана</text>
 <text x="707.6" y="488" font-size="5" textLength="19.6" lengthAdjust="spacingAndGlyphs">каф. РК-3</text>
 <text x="699" y="458" font-size="3">Лит</text>
 <text x="711.6" y="458" font-size="3">Масса</text>
 <text x="724.3" y="458" font-size="3">Масштаб</text>
 <text x="713" y="467" font-size="3.6">261</text>
 <text x="729" y="467" font-size="3.6">1:2</text>
 <text x="696.3" y="467" font-size="3.6">У</text>
 <text x="695.5" y="475.9" font-size="3">Лист</text>
 <text x="714" y="475.9" font-size="3">Листов</text>
 <text x="733" y="475.9" font-size="3">1</text>
 <text x="658" y="493.3" font-size="3.2">Копировал</text>
 <text x="700" y="493.3" font-size="3.2">Формат А3</text>
 <text x="651" y="493.3" font-size="3.2">1</text>
 <text x="575" y="458.6" font-size="2.7">Изм Лист</text>
 <text x="590" y="458.6" font-size="2.7">№ докум.</text>
 <text x="611" y="458.6" font-size="2.7">Подп.</text>
 <text x="624" y="458.6" font-size="2.7">Дата</text>
 <text x="575" y="462.3" font-size="2.7">Разраб.</text>
 <text x="590" y="462.3" font-size="2.7">Усачев Г.А.</text>
 <text x="575" y="466.6" font-size="2.7">Пров.</text>
 <text x="590" y="466.6" font-size="2.7">Жук М.С.</text>
 <text x="575" y="475.6" font-size="2.7">Т.контр.</text>
 <text x="575" y="480" font-size="2.7">Н.контр.</text>
 <text x="575" y="484.3" font-size="2.7">Утв.</text>
 <text x="0" y="0" font-size="3" transform="translate(379 276) rotate(-90)">Перв. примен.</text>
 <text x="0" y="0" font-size="3" transform="translate(379 333) rotate(-90)">Справ. №</text>
 <text x="0" y="0" font-size="3" transform="translate(379 385) rotate(-90)">Подп. и дата</text>
 <text x="0" y="0" font-size="3" transform="translate(379 411) rotate(-90)">Инв. № дубл.</text>
 <text x="0" y="0" font-size="3" transform="translate(379 434) rotate(-90)">Взам. инв. №</text>
 <text x="0" y="0" font-size="3" transform="translate(379 465) rotate(-90)">Подп. и дата</text>
 <text x="0" y="0" font-size="3" transform="translate(379 489) rotate(-90)">Инв. № подл.</text>
</g>

</svg>
<!-- /DRAWING -->
</body></html>
